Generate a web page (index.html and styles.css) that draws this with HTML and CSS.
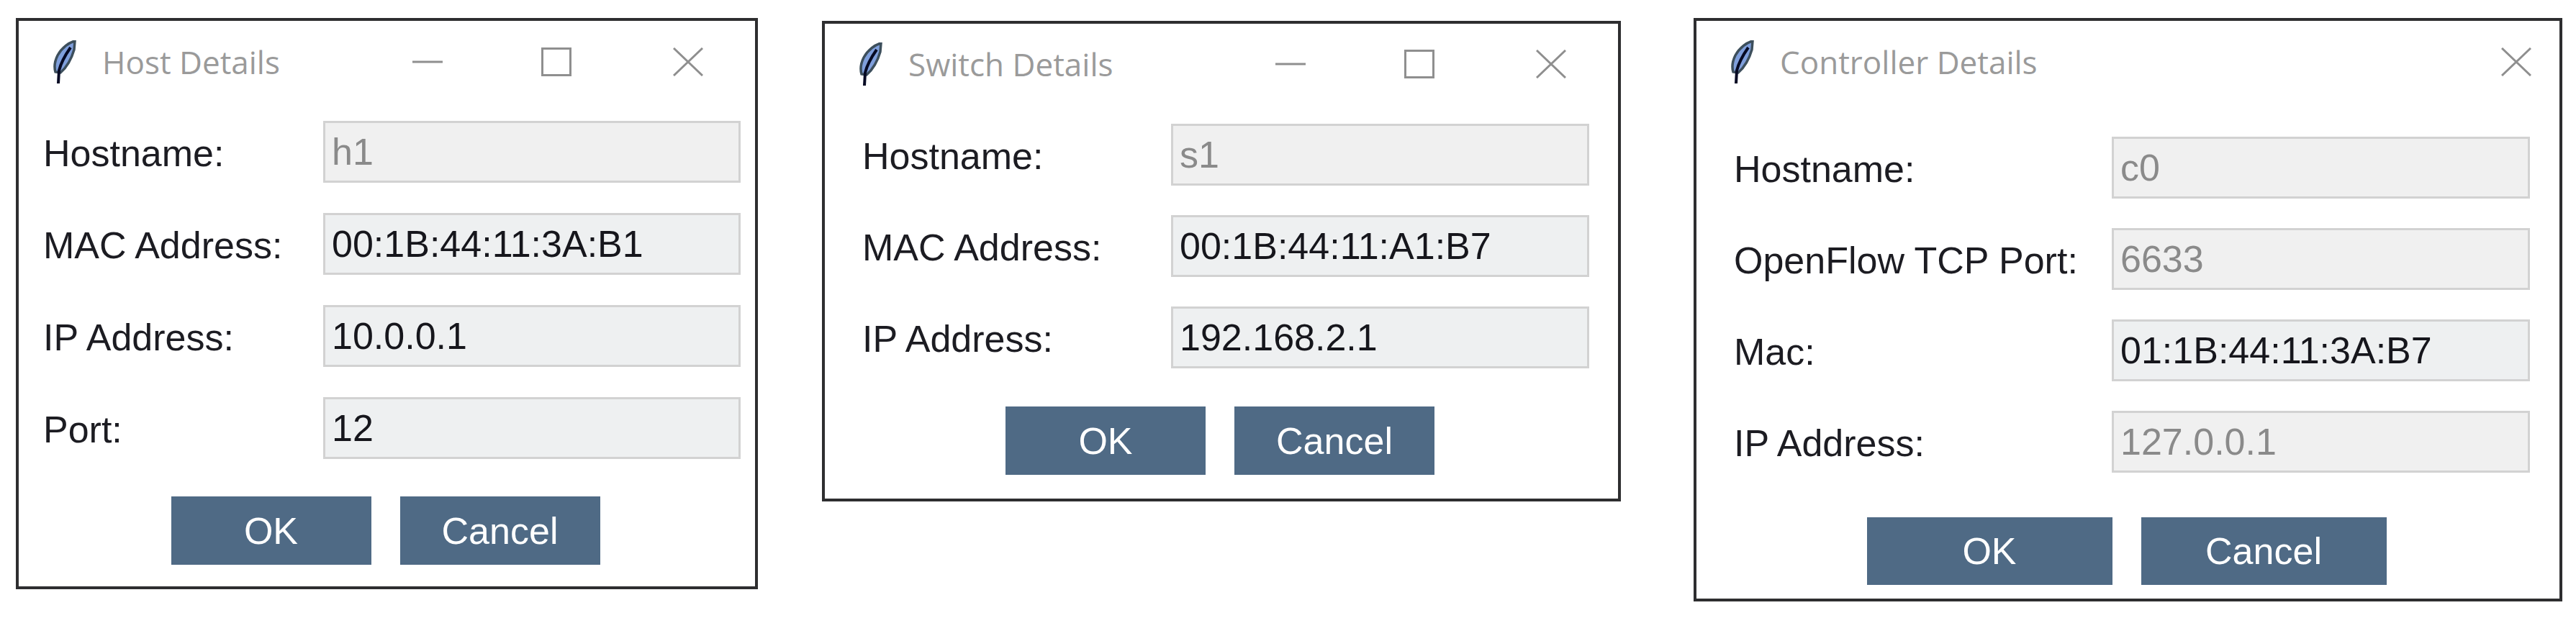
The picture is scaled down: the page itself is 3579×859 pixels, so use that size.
FILE: index.html
```html
<!DOCTYPE html>
<html>
<head>
<meta charset="utf-8">
<title>Details dialogs</title>
<link rel="stylesheet" href="styles.css">
</head>
<body>

<svg class="defs" width="0" height="0">
	<symbol id="feather" viewBox="0 0 34 60">
		<path d="M32 1 C24 3 14 10 8 21 C4 29 3 37 5 44 L12 45 C20 38 27 27 31 13 Z" fill="#7f9fdc" stroke="#3d4f5c" stroke-width="3.5"/>
		<path d="M26 10 C19 20 13 30 10 42 L9 60" fill="none" stroke="#060a24" stroke-width="4"/>
	</symbol>
</svg>

<!-- Host -->
<div class="win win-host">
	<div class="titlebar">
		<svg class="feather"><use href="#feather"/></svg>
		<span class="title">Host Details</span>
		<svg class="ctl ctl-min" viewBox="0 0 42 40"><path d="M0 20 H42"/></svg>
		<svg class="ctl ctl-max" viewBox="0 0 42 40"><path d="M1.5 1.5 H40.5 V38.5 H1.5 Z"/></svg>
		<svg class="ctl ctl-close" viewBox="0 0 42 40"><path d="M1 1 L41 39 M41 1 L1 39"/></svg>
	</div>
	<div class="form">
		<label>Hostname:</label><input class="off" value="h1" disabled>
		<label>MAC Address:</label><input value="00:1B:44:11:3A:B1">
		<label>IP Address:</label><input value="10.0.0.1">
		<label>Port:</label><input value="12">
	</div>
	<div class="buttons">
		<button>OK</button>
		<button>Cancel</button>
	</div>
</div>

<!-- Switch -->
<div class="win win-switch">
	<div class="titlebar">
		<svg class="feather"><use href="#feather"/></svg>
		<span class="title">Switch Details</span>
		<svg class="ctl ctl-min" viewBox="0 0 42 40"><path d="M0 20 H42"/></svg>
		<svg class="ctl ctl-max" viewBox="0 0 42 40"><path d="M1.5 1.5 H40.5 V38.5 H1.5 Z"/></svg>
		<svg class="ctl ctl-close" viewBox="0 0 42 40"><path d="M1 1 L41 39 M41 1 L1 39"/></svg>
	</div>
	<div class="form">
		<label>Hostname:</label><input class="off" value="s1" disabled>
		<label>MAC Address:</label><input value="00:1B:44:11:A1:B7">
		<label>IP Address:</label><input value="192.168.2.1">
	</div>
	<div class="buttons">
		<button>OK</button>
		<button>Cancel</button>
	</div>
</div>

<!-- Controller -->
<div class="win win-ctrl">
	<div class="titlebar">
		<svg class="feather"><use href="#feather"/></svg>
		<span class="title">Controller Details</span>
		<svg class="ctl ctl-close" viewBox="0 0 42 40"><path d="M1 1 L41 39 M41 1 L1 39"/></svg>
	</div>
	<div class="form">
		<label>Hostname:</label><input class="off" value="c0" disabled>
		<label>OpenFlow TCP Port:</label><input class="off" value="6633" disabled>
		<label>Mac:</label><input value="01:1B:44:11:3A:B7">
		<label>IP Address:</label><input class="off" value="127.0.0.1" disabled>
	</div>
	<div class="buttons">
		<button>OK</button>
		<button>Cancel</button>
	</div>
</div>

</body>
</html>
```

FILE: styles.css
```css
html, body {
  margin: 0;
  height: 859px;
  overflow: hidden;
  background: #fff;
}
body {
  display: flex;
  align-items: flex-start;
  font-family: "Liberation Sans", Arial, sans-serif;
  font-size: 52px;
  color: #1c1c22;
}
.defs {
  position: absolute;
}

.win {
  box-sizing: border-box;
  flex: none;
  border: 4px solid #2e2e30;
  background: #fff;
}
.win-host {
  width: 1031px;
  height: 794px;
  margin: 25px 0 0 22px;
}
.win-switch {
  width: 1110px;
  height: 668px;
  margin: 29px 0 0 89px;
}
.win-ctrl {
  width: 1207px;
  height: 811px;
  margin: 25px 0 0 101px;
}

.titlebar {
  display: flex;
  align-items: center;
  height: 114px;
}
.win-switch .titlebar { height: 111px; }
.feather {
  width: 34px;
  height: 60px;
  margin-left: 46px;
  flex: none;
}
.title {
  margin-left: 36px;
  font-family: "Open Sans", sans-serif;
  font-size: 44px;
  color: #9a9a9a;
}
.ctl {
  flex: none;
  width: 42px;
  height: 40px;
  fill: none;
  stroke: #8f8f8f;
  stroke-width: 3;
}
.ctl-min { margin-left: auto; }
.ctl-max { margin-left: 137px; }
.ctl-close { margin-left: 141px; margin-right: 72px; }
.win-ctrl .ctl-close { margin-left: auto; margin-right: 39px; }

.form {
  display: grid;
  grid-template-columns: 389px 580px;
  row-gap: 42px;
  align-items: center;
  padding: 25px 0 0 34px;
}
.form label {
  position: relative;
  top: 2px;
}
.win-switch .form {
  grid-template-columns: 429px 581px;
  row-gap: 41px;
  padding-left: 52px;
  padding-top: 28px;
}
.win-ctrl .form {
  grid-template-columns: 525px 581px;
  row-gap: 41px;
  padding-left: 52px;
  padding-top: 47px;
}
.form input {
  box-sizing: border-box;
  width: 100%;
  height: 86px;
  padding: 0 0 0 9px;
  border: 3px solid #d2d2d2;
  border-radius: 0;
  outline: none;
  background: #eef0f1;
  font: inherit;
  color: #16161c;
}
.form input.off {
  background: #f0f0f0;
  color: #8a8a8a;
}

.buttons {
  display: flex;
  justify-content: center;
  gap: 40px;
  margin-top: 52px;
  padding-right: 4px;
}
.win-switch .buttons { margin-top: 53px; }
.win-ctrl .buttons { margin-top: 62px; }
.buttons button {
  width: 278px;
  height: 95px;
  padding: 0;
  border: 0;
  background: #4f6a85;
  font: inherit;
  color: #fff;
}
.win-ctrl .buttons button {
  width: 341px;
  height: 94px;
}
```
